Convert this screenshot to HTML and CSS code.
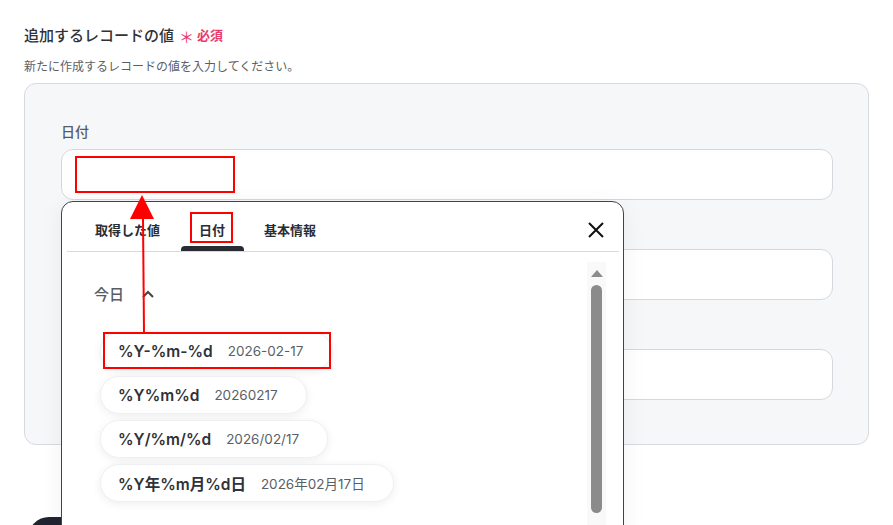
FILE: index.html
```html
<!DOCTYPE html>
<html lang="ja">
<head>
<meta charset="utf-8">
<title>追加するレコードの値</title>
<link rel="stylesheet" href="styles.css">
</head>
<body>
<div class="page">
  <div class="heading">
    <span class="title">追加するレコードの値</span>
    <span class="req"><span class="star">＊</span>必須</span>
  </div>
  <p class="desc">新たに作成するレコードの値を入力してください。</p>

  <div class="panel">
    <div class="field">
      <div class="label">日付</div>
      <div class="input"></div>

      <div class="popup">
        <div class="tabs">
          <div class="tab">取得した値</div>
          <div class="tab active">日付</div>
          <div class="tab">基本情報</div>
        </div>
        <svg class="close" viewBox="0 0 16 16" width="16" height="16">
          <path d="M1 1 L15 15 M15 1 L1 15" stroke="#111" stroke-width="2" fill="none"/>
        </svg>
        <div class="divider"></div>
        <div class="popup-body">
          <div class="list">
            <div class="group-head">
              <span>今日</span>
              <svg class="chev" viewBox="0 0 12 8" width="12" height="8">
                <path d="M1 7 L6 2 L11 7" stroke="#444" stroke-width="2" fill="none"/>
              </svg>
            </div>
            <div class="chips">
              <div class="chip"><span class="key">%Y-%m-%d</span><span class="val">2026-02-17</span></div>
              <div class="chip"><span class="key">%Y%m%d</span><span class="val">20260217</span></div>
              <div class="chip"><span class="key">%Y/%m/%d</span><span class="val">2026/02/17</span></div>
              <div class="chip"><span class="key">%Y年%m月%d日</span><span class="val">2026年02月17日</span></div>
            </div>
          </div>
          <div class="scroll">
            <div class="scroll-up"></div>
            <div class="scroll-thumb"></div>
          </div>
        </div>
      </div>
    </div>
    <div class="field">
      <div class="label">件名</div>
      <div class="input"></div>
    </div>
    <div class="field">
      <div class="label">内容</div>
      <div class="input"></div>
    </div>
  </div>

  <div class="dark-btn"></div>
</div>

<div class="mark mark-input"></div>
<div class="mark mark-tab"></div>
<div class="mark mark-chip"></div>
<svg class="arrow" viewBox="0 0 893 525" width="893" height="525">
  <polygon points="142,195 130,219 154,219" fill="#ff0000"/>
  <line x1="143" y1="218" x2="144" y2="333" stroke="#ff0000" stroke-width="2"/>
</svg>
</body>
</html>
```

FILE: styles.css
```css
html, body {
  margin: 0;
  padding: 0;
  height: 525px;
  overflow: hidden;
  background: #ffffff;
}

body {
  position: relative;
  font-family: "Noto Sans CJK JP", "Noto Sans", sans-serif;
  color: #2f3237;
}

.page {
  padding: 25px 24px 0 24px;
}

.heading {
  display: flex;
  align-items: center;
  height: 20px;
  line-height: 20px;
}

.title {
  font-size: 15px;
  font-weight: 500;
  color: #2f3237;
}

.req {
  display: flex;
  align-items: center;
  margin-left: 5px;
  font-size: 13px;
  font-weight: 700;
  color: #ec3a6a;
}

.star {
  font-size: 15px;
  font-weight: 400;
  margin-right: 3px;
  position: relative;
  top: 2px;
}

.desc {
  margin: 12px 0 0 0;
  font-size: 12px;
  line-height: 18px;
  color: #5a5f67;
}

.panel {
  margin-top: 8px;
  background: #f6f7f9;
  border: 1px solid #d6dae1;
  border-radius: 12px;
  padding: 37px 35px 44px 36px;
  display: flex;
  flex-direction: column;
  gap: 21px;
}

.field {
  position: relative;
  display: flex;
  flex-direction: column;
}

.label {
  font-size: 14px;
  line-height: 20px;
  font-weight: 500;
  color: #575c65;
  margin-bottom: 8px;
}

.input {
  height: 51px;
  box-sizing: border-box;
  background: #ffffff;
  border: 1px solid #d3d8df;
  border-radius: 12px;
}

.popup {
  position: absolute;
  left: 0;
  top: calc(100% + 1px);
  width: 563px;
  height: 340px;
  box-sizing: border-box;
  background: #ffffff;
  border: 1px solid #3d4451;
  border-radius: 12px 12px 0 0;
  z-index: 5;
  display: flex;
  flex-direction: column;
  box-shadow: 0 4px 24px rgba(0, 0, 0, 0.06);
}

.tabs {
  display: flex;
  gap: 2px;
  padding-left: 15px;
  height: 49px;
}

.tab {
  position: relative;
  padding: 19px 19px 0 18px;
  font-size: 13px;
  line-height: 18px;
  font-weight: 600;
  color: #2a2d33;
}

.tab.active::after {
  content: "";
  position: absolute;
  left: 0;
  right: 0;
  bottom: 0;
  height: 5px;
  background: #262b34;
  border-radius: 4px 4px 0 0;
}

.close {
  position: absolute;
  top: 20px;
  right: 19px;
}

.divider {
  height: 1px;
  background: #d5d8de;
  margin: 0 4px 0 5px;
}

.popup-body {
  flex: 1;
  display: flex;
}

.list {
  flex: 1;
}

.group-head {
  display: flex;
  align-items: center;
  margin-top: 32px;
  padding-left: 32px;
  font-size: 15px;
  line-height: 20px;
  font-weight: 500;
  color: #575c65;
}

.chev {
  margin-left: 18px;
}

.chips {
  margin-top: 28px;
  padding-left: 38px;
  display: flex;
  flex-direction: column;
  align-items: flex-start;
  gap: 6px;
}

.chip {
  height: 38px;
  box-sizing: border-box;
  display: flex;
  align-items: center;
  gap: 15px;
  padding: 0 28px 0 17px;
  background: #ffffff;
  border: 1px solid #eef0f3;
  border-radius: 19px;
  box-shadow: 0 2px 10px rgba(0, 0, 0, 0.07);
  font-family: "Inter", "Noto Sans CJK JP", sans-serif;
}

.key {
  font-size: 15.5px;
  font-weight: 600;
  color: #2f3237;
}

.val {
  font-size: 13.5px;
  color: #5a5f67;
}

.scroll {
  width: 19px;
  margin: 10px 17px 0 0;
  background: #f9f9f9;
  display: flex;
  flex-direction: column;
  align-items: center;
}

.scroll-up {
  margin-top: 8px;
  width: 0;
  height: 0;
  border-left: 6px solid transparent;
  border-right: 6px solid transparent;
  border-bottom: 7px solid #8c8c8c;
}

.scroll-thumb {
  margin-top: 8px;
  width: 11px;
  height: 228px;
  border-radius: 6px;
  background: #8b8b8b;
}

.dark-btn {
  margin: 72px 0 0 4px;
  width: 220px;
  height: 42px;
  border-radius: 22px;
  background: #1f2430;
}

.mark {
  position: absolute;
  border: 2px solid #ff0000;
  box-sizing: border-box;
  z-index: 10;
}

.mark-input {
  left: 75px;
  top: 156px;
  width: 160px;
  height: 37px;
}

.mark-tab {
  left: 190px;
  top: 212px;
  width: 43px;
  height: 31px;
}

.mark-chip {
  left: 103px;
  top: 332px;
  width: 228px;
  height: 37px;
}

.arrow {
  position: absolute;
  left: 0;
  top: 0;
  z-index: 11;
  pointer-events: none;
}
```
